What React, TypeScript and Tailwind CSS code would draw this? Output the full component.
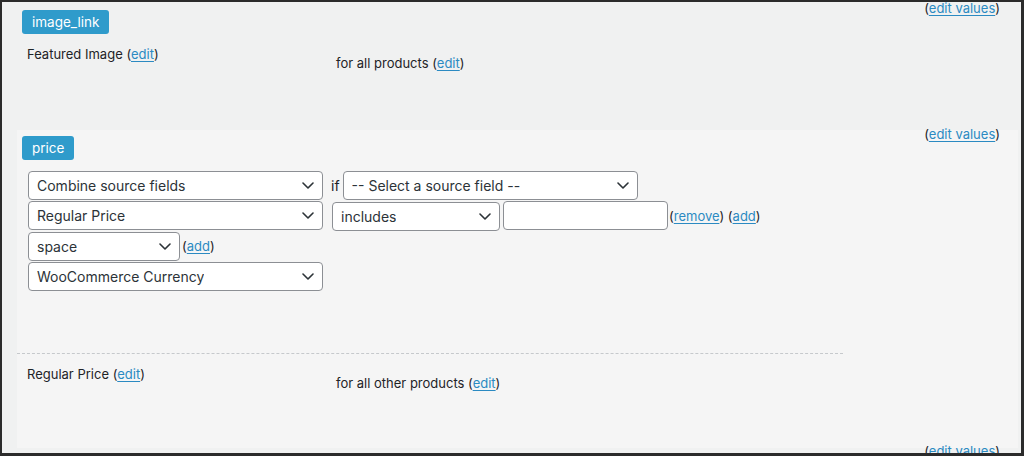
import React from 'react'

const font = { fontFamily: 'Inter, "Noto Sans", sans-serif' }

function Chevron() {
  return (
    <svg width="12" height="7" viewBox="0 0 12 7" fill="none" className="shrink-0">
      <polyline points="1,1 6,6 11,1" stroke="#2c3338" strokeWidth="1.6" strokeLinecap="round" strokeLinejoin="round" />
    </svg>
  )
}

function Select({ label, w }: { label: string; w: string }) {
  return (
    <div
      className={`${w} h-[29px] flex items-center justify-between rounded-[4px] border border-[#8c8f94] bg-white pl-2 pr-[8px] text-[14px] text-[#2c3338]`}
    >
      <span className="truncate">{label}</span>
      <Chevron />
    </div>
  )
}

function Edit({ children = 'edit' }: { children?: React.ReactNode }) {
  return (
    <>
      (<a className="text-[#2b8ac2] underline decoration-1 underline-offset-2">{children}</a>)
    </>
  )
}

function Badge({ children }: { children: React.ReactNode }) {
  return (
    <div className="inline-flex h-[24px] items-center rounded-[3px] bg-[#2f9bcb] px-[10px] text-[13.5px] text-white">
      {children}
    </div>
  )
}

function EditValues() {
  return (
    <div className="text-[13px] leading-[13px] text-[#1e2327]">
      <Edit>edit values</Edit>
    </div>
  )
}

export default function App() {
  return (
    <div
      style={font}
      className="w-[1024px] h-[456px] overflow-hidden border-2 border-r-[3px] border-b-[3px] border-[#2b2b2b] bg-[#f0f1f1] text-[#1e2327]"
    >
      {/* image_link mapping */}
      <section className="h-[128px] pl-[20px] pr-[21px]">
        <div className="flex items-start justify-between">
          <div className="pt-[7px]">
            <Badge>image_link</Badge>
          </div>
          <EditValues />
        </div>
        <div className="mt-[11px] flex text-[13px]">
          <div className="w-[314px] pl-[5px]">
            Featured Image <Edit />
          </div>
          <div className="pt-[9px]">
            for all products <Edit />
          </div>
        </div>
      </section>

      {/* price mapping */}
      <section className="ml-[15px] mr-[3px] h-[318px] bg-[#f5f5f5] pl-[5px] pr-[18px]">
        <div className="flex items-start justify-between">
          <div className="pt-[5px]">
            <Badge>price</Badge>
          </div>
          <div className="-mt-[2px]">
            <EditValues />
          </div>
        </div>

        <div className="mt-[11px] pl-[6px] flex flex-col gap-[1px] text-[13px]">
          <div className="flex items-start">
            <Select label="Combine source fields" w="w-[295px]" />
            <span className="ml-[8px] mr-[3px] mt-[4px] text-[14px]">if</span>
            <Select label="-- Select a source field --" w="w-[295px]" />
          </div>
          <div className="flex items-start">
            <Select label="Regular Price" w="w-[295px]" />
            <div className="ml-[9px] mt-[1px]">
              <Select label="includes" w="w-[168px]" />
            </div>
            <div className="ml-[3px] h-[29px] w-[165px] rounded-[4px] border border-[#8c8f94] bg-white" />
            <span className="ml-[1px] mt-[6px]">
              <Edit>remove</Edit> <Edit>add</Edit>
            </span>
          </div>
          <div className="flex items-start">
            <Select label="space" w="w-[152px]" />
            <span className="ml-[2px] mt-[5px]">
              <Edit>add</Edit>
            </span>
          </div>
          <Select label="WooCommerce Currency" w="w-[295px]" />
        </div>

        <div className="mt-[62px] w-[826px] -ml-[5px] border-t border-dashed border-[#c6c9cc]" />

        <div className="mt-[11px] flex text-[13px]">
          <div className="w-[314px] pl-[5px]">
            Regular Price <Edit />
          </div>
          <div className="pt-[9px]">
            for all other products <Edit />
          </div>
        </div>
      </section>

      <div className="-mt-[3px] flex justify-end pr-[21px]">
        <EditValues />
      </div>
    </div>
  )
}
